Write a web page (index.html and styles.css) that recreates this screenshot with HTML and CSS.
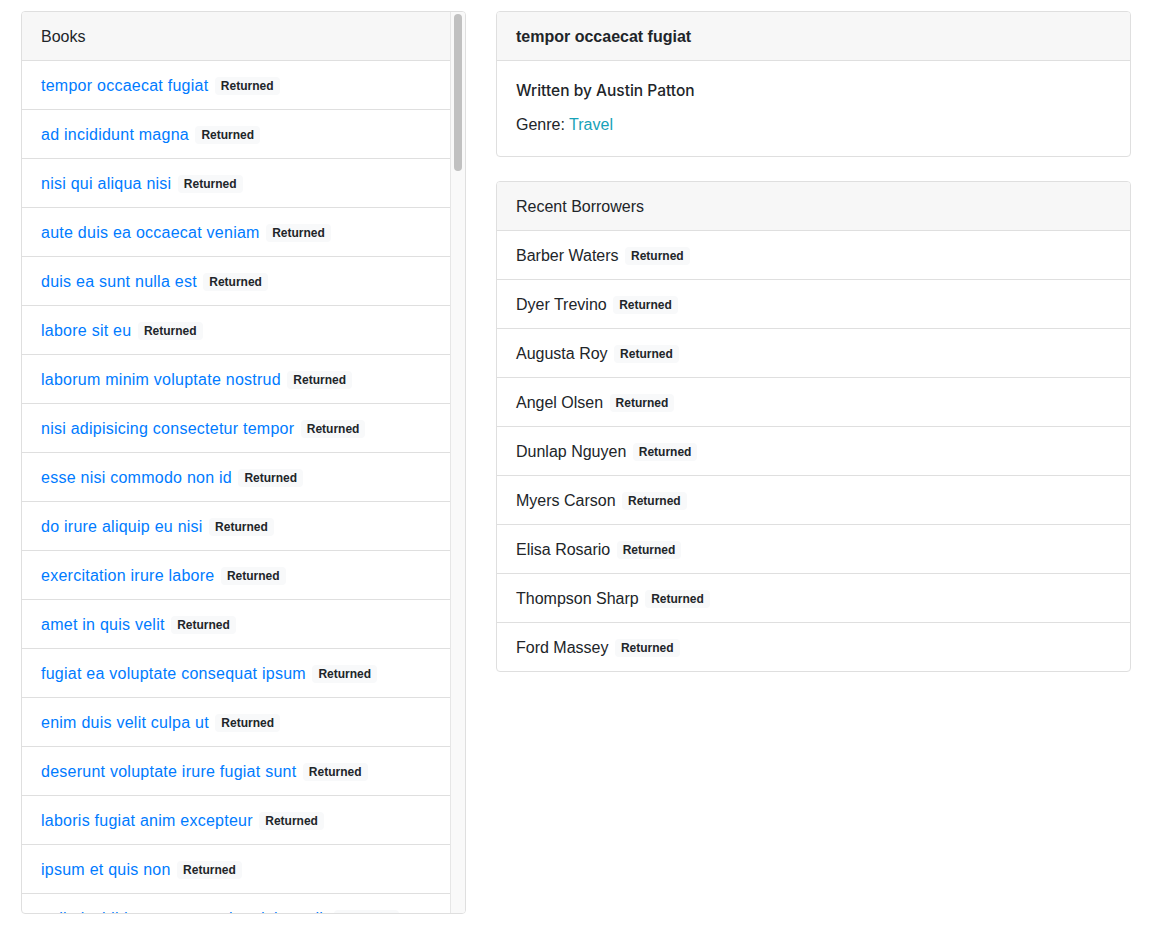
FILE: index.html
```html
<!DOCTYPE html>
<html lang="en">
<head>
<meta charset="utf-8">
<title>Library</title>
<link rel="stylesheet" href="styles.css">
</head>
<body>
<div class="page">
  <section class="card books">
    <div class="books-scroll">
      <div class="card-header">Books</div>
      <ul class="list">
        <li class="item"><a href="#">tempor occaecat fugiat</a> <span class="badge">Returned</span></li>
        <li class="item"><a href="#">ad incididunt magna</a> <span class="badge">Returned</span></li>
        <li class="item"><a href="#">nisi qui aliqua nisi</a> <span class="badge">Returned</span></li>
        <li class="item"><a href="#">aute duis ea occaecat veniam</a> <span class="badge">Returned</span></li>
        <li class="item"><a href="#">duis ea sunt nulla est</a> <span class="badge">Returned</span></li>
        <li class="item"><a href="#">labore sit eu</a> <span class="badge">Returned</span></li>
        <li class="item"><a href="#">laborum minim voluptate nostrud</a> <span class="badge">Returned</span></li>
        <li class="item"><a href="#">nisi adipisicing consectetur tempor</a> <span class="badge">Returned</span></li>
        <li class="item"><a href="#">esse nisi commodo non id</a> <span class="badge">Returned</span></li>
        <li class="item"><a href="#">do irure aliquip eu nisi</a> <span class="badge">Returned</span></li>
        <li class="item"><a href="#">exercitation irure labore</a> <span class="badge">Returned</span></li>
        <li class="item"><a href="#">amet in quis velit</a> <span class="badge">Returned</span></li>
        <li class="item"><a href="#">fugiat ea voluptate consequat ipsum</a> <span class="badge">Returned</span></li>
        <li class="item"><a href="#">enim duis velit culpa ut</a> <span class="badge">Returned</span></li>
        <li class="item"><a href="#">deserunt voluptate irure fugiat sunt</a> <span class="badge">Returned</span></li>
        <li class="item"><a href="#">laboris fugiat anim excepteur</a> <span class="badge">Returned</span></li>
        <li class="item"><a href="#">ipsum et quis non</a> <span class="badge">Returned</span></li>
        <li class="item"><a href="#">nulla incididunt tempor culpa dolore elit</a> <span class="badge">Returned</span></li>
        <li class="item"><a href="#">officia sint cillum</a> <span class="badge">Returned</span></li>
        <li class="item"><a href="#">mollit qui do ullamco</a> <span class="badge">Returned</span></li>
      </ul>
    </div>
    <div class="scrollbar" aria-hidden="true"><div class="thumb"></div></div>
  </section>

  <div class="side">
    <section class="card">
      <div class="card-header strong">tempor occaecat fugiat</div>
      <div class="card-body">
        <h6 class="subtitle">Written by Austin Patton</h6>
        <p class="genre">Genre: <a class="info" href="#">Travel</a></p>
      </div>
    </section>

    <section class="card">
      <div class="card-header">Recent Borrowers</div>
      <ul class="list">
        <li class="item">Barber Waters <span class="badge">Returned</span></li>
        <li class="item">Dyer Trevino <span class="badge">Returned</span></li>
        <li class="item">Augusta Roy <span class="badge">Returned</span></li>
        <li class="item">Angel Olsen <span class="badge">Returned</span></li>
        <li class="item">Dunlap Nguyen <span class="badge">Returned</span></li>
        <li class="item">Myers Carson <span class="badge">Returned</span></li>
        <li class="item">Elisa Rosario <span class="badge">Returned</span></li>
        <li class="item">Thompson Sharp <span class="badge">Returned</span></li>
        <li class="item">Ford Massey <span class="badge">Returned</span></li>
      </ul>
    </section>
  </div>
</div>
</body>
</html>
```

FILE: styles.css
```css
* { box-sizing: border-box; }

html, body {
  margin: 0;
  padding: 0;
  background: #fff;
}

body {
  font-family: "Liberation Sans", Arial, sans-serif;
  font-size: 16px;
  line-height: 24px;
  color: #212529;
}

.page {
  display: grid;
  grid-template-columns: 445px 1fr;
  column-gap: 30px;
  align-items: start;
  padding: 11px 21px 0 21px;
}

.card {
  border: 1px solid #dfdfdf;
  border-radius: 4px;
  background: #fff;
  overflow: hidden;
}

.books {
  height: 903px;
  display: flex;
}

.books-scroll {
  flex: 1;
  min-width: 0;
  overflow: hidden;
}

.scrollbar {
  flex: 0 0 15px;
  background: #f9f9f9;
  border-left: 1px solid #e6e6e6;
  padding: 2px 3px 0 3px;
}

.thumb {
  width: 8px;
  height: 157px;
  background: #c1c1c1;
  border-radius: 4px;
}

.card-header {
  padding: 13px 19px 11px;
  background: #f7f7f7;
  border-bottom: 1px solid #dfdfdf;
  white-space: nowrap;
}
.card-header.strong { font-weight: 700; }

.list {
  list-style: none;
  margin: 0;
  padding: 0;
}

.item {
  padding: 13px 19px 11px;
  border-bottom: 1px solid #dfdfdf;
  white-space: nowrap;
}
.item:last-child { border-bottom: 0; }

a {
  color: #007bff;
  text-decoration: none;
}
.item a { letter-spacing: 0.25px; }
a.info { color: #17a2b8; }

.badge {
  display: inline-block;
  margin-left: 2px;
  padding: 3px 6px;
  font-size: 12px;
  font-weight: 700;
  line-height: 1;
  color: #212529;
  background: #f8f9fa;
  border-radius: 4px;
  vertical-align: 1px;
}

.side {
  display: flex;
  flex-direction: column;
  gap: 24px;
}

.card-body {
  padding: 20px 19px 19px;
}

.subtitle {
  margin: 0 0 13px 0;
  font-family: Inter, "Liberation Sans", sans-serif;
  font-size: 15.5px;
  font-weight: 500;
  line-height: 19px;
}

.genre {
  margin: 0;
}
```
